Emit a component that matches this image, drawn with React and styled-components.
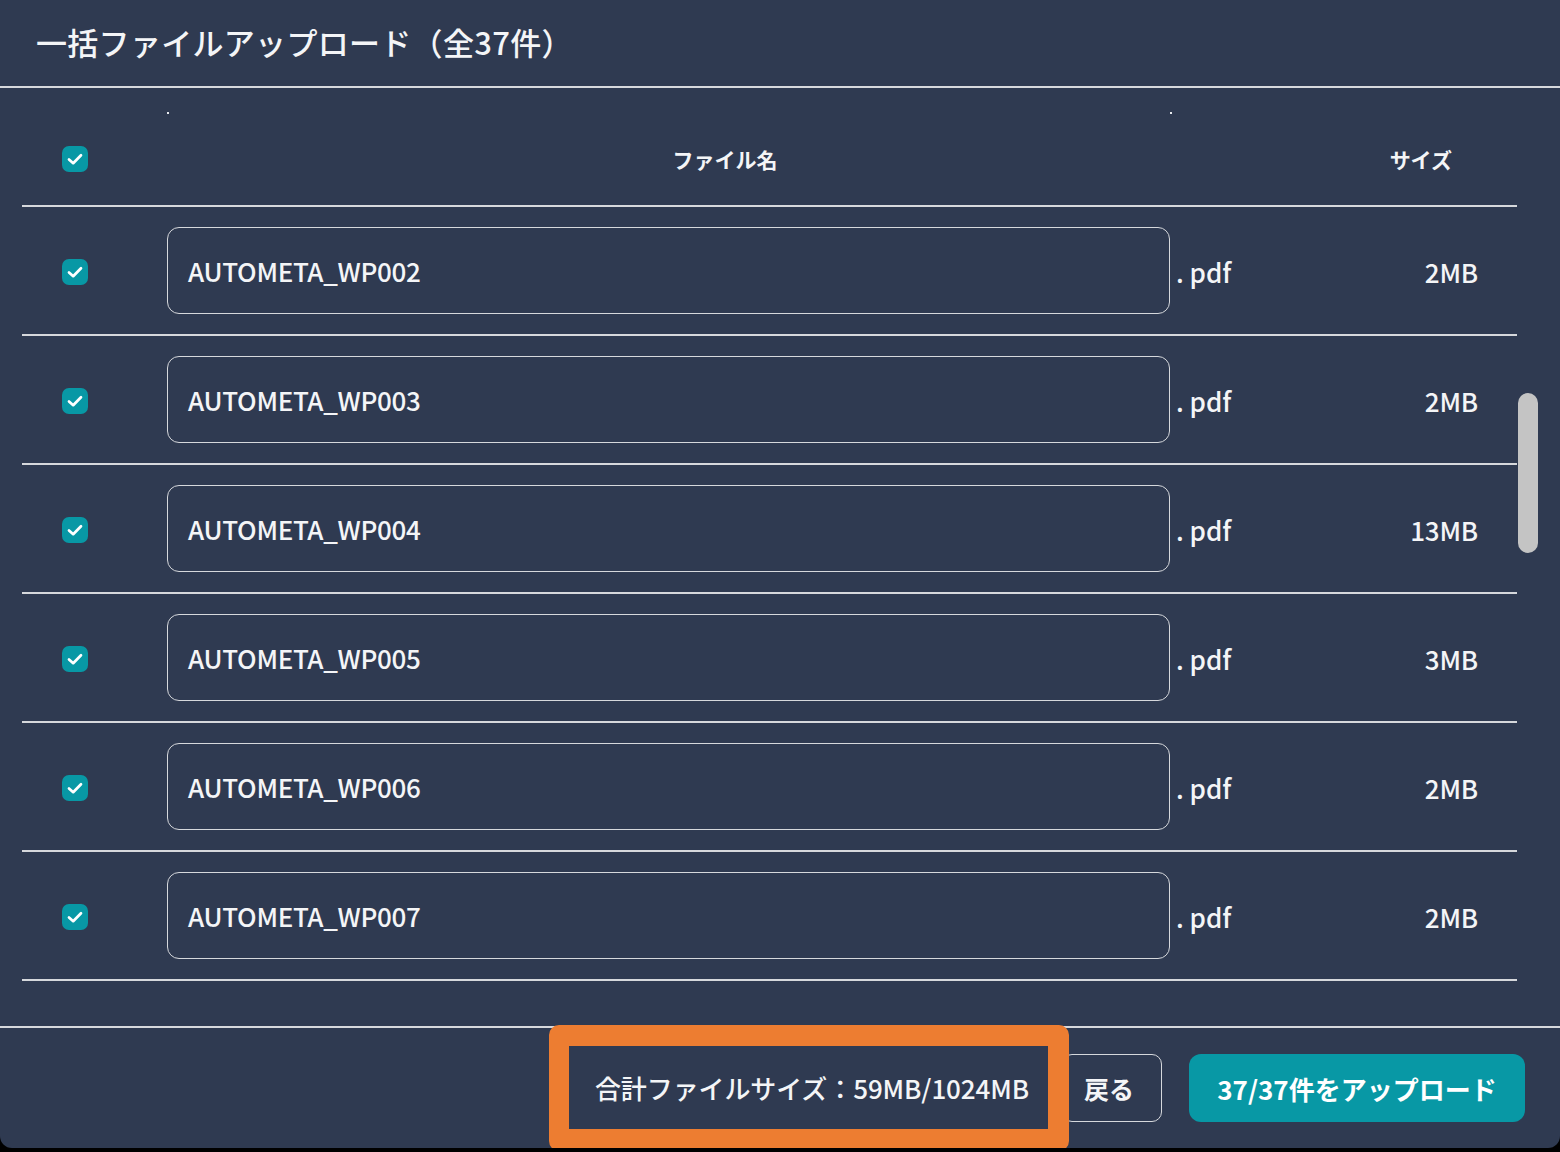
import React from "react";
import styled, { createGlobalStyle } from "styled-components";

const Global = createGlobalStyle`
  html, body { margin: 0; padding: 0; background: #000; }
  body { font-family: "Noto Sans CJK JP", "Noto Sans", sans-serif; }
  * { box-sizing: border-box; }
`;

const BG = "#2f3a51";
const LINE = "#d6d8dc";
const TEAL = "#0898a5";
const COLS = "145px 1003px 113px 234px";

const Panel = styled.div`
  width: 1560px;
  height: 1148px;
  background: ${BG};
  border-radius: 0 0 12px 12px;
  display: flex;
  flex-direction: column;
  color: #f4f5f7;
`;

const Header = styled.header`
  height: 88px;
  padding: 0 36px 4px;
  display: flex;
  align-items: center;
  border-bottom: 2px solid ${LINE};
  flex-shrink: 0;
`;

const Title = styled.h1`
  margin: 0;
  font-size: 31px;
  font-weight: 500;
  letter-spacing: 0.3px;
`;

const Body = styled.div`
  flex: 1;
  display: flex;
  min-height: 0;
  border-bottom: 2px solid ${LINE};
`;

const Table = styled.div`
  margin-left: 22px;
  width: 1495px;
  display: flex;
  flex-direction: column;
`;

const HeadRow = styled.div`
  display: grid;
  grid-template-columns: ${COLS};
  height: 119px;
  padding-top: 24px;
  align-items: center;
  border-bottom: 2px solid ${LINE};
`;

const Row = styled.div`
  display: grid;
  grid-template-columns: ${COLS};
  height: 129px;
  align-items: center;
  border-bottom: 2px solid ${LINE};
`;

const CheckCell = styled.div`
  display: flex;
  justify-content: flex-start;
  padding-left: 40px;
  padding-top: ${(p) => (p.$head ? "0px" : "2px")};
`;

const Check = styled.span`
  width: 26px;
  height: 26px;
  border-radius: 7px;
  background: ${TEAL};
  display: inline-flex;
  align-items: center;
  justify-content: center;
`;

const HeadLabel = styled.div`
  position: relative;
  grid-column: ${(p) => p.$span || "auto"};
  font-size: 21px;
  font-weight: 700;
  text-align: ${(p) => p.$align || "center"};
  padding-right: ${(p) => p.$pr || 0}px;
`;

const Mark = styled.i`
  position: absolute;
  top: -32px;
  left: ${(p) => p.$left}px;
  width: 2px;
  height: 2px;
  background: #e8eaee;
`;

const NameBox = styled.div`
  height: 87px;
  border: 1.5px solid ${LINE};
  border-radius: 12px;
  display: flex;
  align-items: center;
  padding-left: 20px;
  font-size: 26px;
  font-weight: 500;
  letter-spacing: -0.3px;
`;

const Ext = styled.div`
  font-size: 26px;
  font-weight: 500;
  padding-left: 6px;
  padding-top: 2px;
`;

const Size = styled.div`
  font-size: 26px;
  font-weight: 500;
  text-align: right;
  padding-right: 39px;
  padding-top: 2px;
  letter-spacing: -0.2px;
`;

const ScrollTrack = styled.div`
  width: 43px;
  padding-left: 1px;
`;

const Thumb = styled.div`
  width: 20px;
  height: 160px;
  margin-top: 305px;
  border-radius: 10px;
  background: #c4c4c4;
`;

const Footer = styled.footer`
  height: 120px;
  flex-shrink: 0;
  display: flex;
  align-items: center;
  justify-content: flex-end;
  padding-right: 35px;
`;

const Summary = styled.div`
  position: relative;
  z-index: 1;
  height: 126px;
  border: solid #ed7d31;
  border-width: 21px 21px 22px 20px;
  border-radius: 10px;
  padding: 0 19px 0 26px;
  display: flex;
  align-items: center;
  font-size: 26px;
  font-weight: 500;
  letter-spacing: -0.1px;
  margin-right: -7px;
  background: ${BG};
`;

const BackButton = styled.button`
  height: 68px;
  padding: 0 27px 0 21px;
  border: 1.5px solid ${LINE};
  border-radius: 10px;
  background: transparent;
  color: #f4f5f7;
  font-family: inherit;
  font-size: 25px;
  font-weight: 700;
  margin-right: 27px;
`;

const UploadButton = styled.button`
  height: 68px;
  width: 336px;
  border: none;
  border-radius: 12px;
  background: ${TEAL};
  color: #fff;
  font-family: inherit;
  font-size: 26px;
  font-weight: 700;
`;

const CheckIcon = () => (
  <Check>
    <svg width="20" height="20" viewBox="0 0 20 20" fill="none">
      <path d="M4 10.4 L8.2 14.2 L16 6.2" stroke="#fff" strokeWidth="2.7" strokeLinecap="round" strokeLinejoin="round" />
    </svg>
  </Check>
);

const files = [
  { name: "AUTOMETA_WP002", size: "2MB" },
  { name: "AUTOMETA_WP003", size: "2MB" },
  { name: "AUTOMETA_WP004", size: "13MB" },
  { name: "AUTOMETA_WP005", size: "3MB" },
  { name: "AUTOMETA_WP006", size: "2MB" },
  { name: "AUTOMETA_WP007", size: "2MB" },
];

export default function App() {
  return (
    <>
      <Global />
      <Panel>
        <Header>
          <Title>一括ファイルアップロード（全37件）</Title>
        </Header>
        <Body>
          <Table>
            <HeadRow>
              <CheckCell $head>
                <CheckIcon />
              </CheckCell>
              <HeadLabel $span="2 / 4">
                <Mark $left={0} />
                <Mark $left={1003} />
                ファイル名
              </HeadLabel>
              <HeadLabel $align="right" $pr={65}>サイズ</HeadLabel>
            </HeadRow>
            {files.map((f) => (
              <Row key={f.name}>
                <CheckCell>
                  <CheckIcon />
                </CheckCell>
                <NameBox>{f.name}</NameBox>
                <Ext>. pdf</Ext>
                <Size>{f.size}</Size>
              </Row>
            ))}
          </Table>
          <ScrollTrack>
            <Thumb />
          </ScrollTrack>
        </Body>
        <Footer>
          <Summary>合計ファイルサイズ：59MB/1024MB</Summary>
          <BackButton>戻る</BackButton>
          <UploadButton>37/37件をアップロード</UploadButton>
        </Footer>
      </Panel>
    </>
  );
}
